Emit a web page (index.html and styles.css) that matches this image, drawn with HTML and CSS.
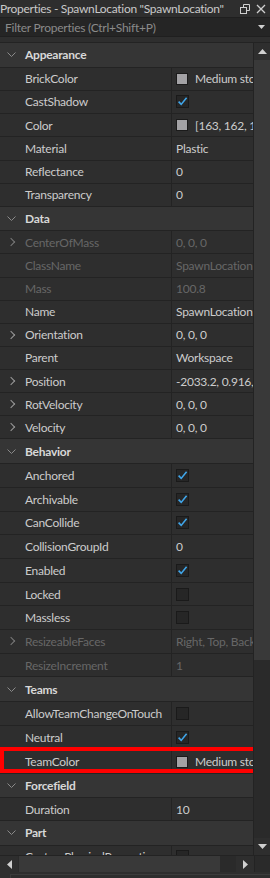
FILE: index.html
```html
<!DOCTYPE html>
<html lang="en">
<head>
    <meta charset="UTF-8">
    <meta name="viewport" content="width=device-width, initial-scale=1.0">
    <title>Properties - SpawnLocation</title>
    <link rel="stylesheet" href="styles.css">
</head>
<body>
    <div class="panel">
        <div class="titlebar">
            <span class="title">Properties - SpawnLocation "SpawnLocation"</span>
            <svg class="tb-icon" width="10" height="10" viewBox="0 0 10 10">
                <path d="M3.5 0.5 H9.5 V6.5 H6.5 M3.5 0.5 V3.5" fill="none" stroke="#cfcfcf" stroke-width="1"/>
                <rect x="0.5" y="3.5" width="6" height="6" fill="none" stroke="#cfcfcf" stroke-width="1"/>
            </svg>
            <svg class="tb-icon" width="10" height="10" viewBox="0 0 10 10">
                <path d="M1 1 L9 9 M9 1 L1 9" stroke="#cfcfcf" stroke-width="1.3"/>
            </svg>
        </div>

        <div class="filter">
            <span class="placeholder">Filter Properties (Ctrl+Shift+P)</span>
            <svg width="7" height="4" viewBox="0 0 7 4"><path d="M0 0 H7 L3.5 4 Z" fill="#cfcfcf"/></svg>
        </div>

        <div class="body">
            <div class="list">
                <!-- Appearance -->
                <div class="section sec-appearance">
                    <div class="group"><svg class="caret" width="9" height="5" viewBox="0 0 9 5"><path d="M0.5 0.5 L4.5 4.5 L8.5 0.5" fill="none" stroke="#8a8a8a" stroke-width="1"/></svg>Appearance</div>
                    <div class="row"><div class="name">BrickColor</div><div class="value"><span class="swatch"></span>Medium stone grey</div></div>
                    <div class="row"><div class="name">CastShadow</div><div class="value"><span class="check on"></span></div></div>
                    <div class="row"><div class="name">Color</div><div class="value"><span class="swatch"></span>[163, 162, 165]</div></div>
                    <div class="row"><div class="name">Material</div><div class="value">Plastic</div></div>
                    <div class="row"><div class="name">Reflectance</div><div class="value">0</div></div>
                    <div class="row"><div class="name">Transparency</div><div class="value">0</div></div>
                </div>

                <!-- Data -->
                <div class="section sec-data">
                    <div class="group"><svg class="caret" width="9" height="5" viewBox="0 0 9 5"><path d="M0.5 0.5 L4.5 4.5 L8.5 0.5" fill="none" stroke="#8a8a8a" stroke-width="1"/></svg>Data</div>
                    <div class="row off"><div class="name"><span class="expand"></span>CenterOfMass</div><div class="value">0, 0, 0</div></div>
                    <div class="row off"><div class="name">ClassName</div><div class="value">SpawnLocation</div></div>
                    <div class="row off"><div class="name">Mass</div><div class="value">100.8</div></div>
                    <div class="row"><div class="name">Name</div><div class="value">SpawnLocation</div></div>
                    <div class="row"><div class="name"><span class="expand"></span>Orientation</div><div class="value">0, 0, 0</div></div>
                    <div class="row"><div class="name">Parent</div><div class="value">Workspace</div></div>
                    <div class="row"><div class="name"><span class="expand"></span>Position</div><div class="value">-2033.2, 0.916, 44.5</div></div>
                    <div class="row"><div class="name"><span class="expand"></span>RotVelocity</div><div class="value">0, 0, 0</div></div>
                    <div class="row"><div class="name"><span class="expand"></span>Velocity</div><div class="value">0, 0, 0</div></div>
                </div>

                <!-- Behavior -->
                <div class="section sec-behavior">
                    <div class="group"><svg class="caret" width="9" height="5" viewBox="0 0 9 5"><path d="M0.5 0.5 L4.5 4.5 L8.5 0.5" fill="none" stroke="#8a8a8a" stroke-width="1"/></svg>Behavior</div>
                    <div class="row"><div class="name">Anchored</div><div class="value"><span class="check on"></span></div></div>
                    <div class="row"><div class="name">Archivable</div><div class="value"><span class="check on"></span></div></div>
                    <div class="row"><div class="name">CanCollide</div><div class="value"><span class="check on"></span></div></div>
                    <div class="row"><div class="name">CollisionGroupId</div><div class="value">0</div></div>
                    <div class="row"><div class="name">Enabled</div><div class="value"><span class="check on"></span></div></div>
                    <div class="row"><div class="name">Locked</div><div class="value"><span class="check"></span></div></div>
                    <div class="row"><div class="name">Massless</div><div class="value"><span class="check"></span></div></div>
                    <div class="row off"><div class="name"><span class="expand"></span>ResizeableFaces</div><div class="value">Right, Top, Back</div></div>
                    <div class="row off"><div class="name">ResizeIncrement</div><div class="value">1</div></div>
                </div>

                <!-- Teams -->
                <div class="section sec-teams">
                    <div class="group"><svg class="caret" width="9" height="5" viewBox="0 0 9 5"><path d="M0.5 0.5 L4.5 4.5 L8.5 0.5" fill="none" stroke="#8a8a8a" stroke-width="1"/></svg>Teams</div>
                    <div class="row"><div class="name">AllowTeamChangeOnTouch</div><div class="value"><span class="check"></span></div></div>
                    <div class="row"><div class="name">Neutral</div><div class="value"><span class="check on"></span></div></div>
                    <div class="row marked"><div class="name">TeamColor</div><div class="value"><span class="swatch"></span>Medium stone grey</div></div>
                </div>

                <!-- Forcefield -->
                <div class="section sec-forcefield">
                    <div class="group"><svg class="caret" width="9" height="5" viewBox="0 0 9 5"><path d="M0.5 0.5 L4.5 4.5 L8.5 0.5" fill="none" stroke="#8a8a8a" stroke-width="1"/></svg>Forcefield</div>
                    <div class="row"><div class="name">Duration</div><div class="value">10</div></div>
                </div>

                <!-- Part -->
                <div class="section sec-part">
                    <div class="group"><svg class="caret" width="9" height="5" viewBox="0 0 9 5"><path d="M0.5 0.5 L4.5 4.5 L8.5 0.5" fill="none" stroke="#8a8a8a" stroke-width="1"/></svg>Part</div>
                    <div class="row"><div class="name">CustomPhysicalProperties</div><div class="value"><span class="check"></span></div></div>
                </div>
            </div>

            <div class="vscroll">
                <div class="sb-btn"><svg width="9" height="5" viewBox="0 0 9 5"><path d="M0 5 H9 L4.5 0 Z" fill="#d0d0d0"/></svg></div>
                <div class="sb-thumb"></div>
                <div class="sb-track"></div>
                <div class="sb-btn"><svg width="9" height="5" viewBox="0 0 9 5"><path d="M0 0 H9 L4.5 5 Z" fill="#d0d0d0"/></svg></div>
            </div>
        </div>

        <div class="hscroll">
            <div class="hb-btn"><svg width="5" height="9" viewBox="0 0 5 9"><path d="M5 0 V9 L0 4.5 Z" fill="#d0d0d0"/></svg></div>
            <div class="hb-thumb"></div>
            <div class="hb-track"></div>
            <div class="hb-btn"><svg width="5" height="9" viewBox="0 0 5 9"><path d="M0 0 V9 L5 4.5 Z" fill="#d0d0d0"/></svg></div>
            <div class="corner"></div>
        </div>

        <div class="footer"><div class="footer-box"></div></div>
    </div>
</body>
</html>
```

FILE: styles.css
```css
body {
    margin: 0;
    background: #2e2e2e;
    font-family: Lato, "Noto Sans", sans-serif;
    font-size: 12px;
    letter-spacing: -0.25px;
    color: #cccccc;
}
.panel {
    width: 270px;
    height: 878px;
    display: flex;
    flex-direction: column;
    overflow: hidden;
    background: #2e2e2e;
}

/* title + filter */
.titlebar {
    height: 17px;
    display: flex;
    align-items: center;
    gap: 6px;
    padding-right: 4px;
    white-space: nowrap;
}
.title {
    flex: 1;
    font-size: 12px;
    letter-spacing: -0.3px;
    color: #c9c9c9;
    line-height: 17px;
    overflow: hidden;
}
.tb-icon {
    flex: none;
}
.filter {
    height: 20px;
    box-sizing: border-box;
    background: #252525;
    border-top: 1px solid #1f1f1f;
    border-bottom: 1px solid #1f1f1f;
    display: flex;
    align-items: center;
    justify-content: space-between;
    padding: 0 5px 0 5px;
}
.placeholder {
    color: #8a8a8a;
}

/* property list */
.body {
    margin-top: 5px;
    height: 812px;
    display: flex;
    border-top: 1px solid #232323;
}
.list {
    width: 253px;
    overflow: hidden;
    border-right: 1px solid #232323;
}
.sec-appearance { --row: 23.25px; --head: 24.6px; }
.sec-data       { --row: 23.1px;  --head: 24.3px; }
.sec-behavior   { --row: 23.7px;  --head: 25px; }
.sec-teams      { --row: 23.85px; --head: 25px; }
.sec-forcefield { --row: 23.4px;  --head: 24px; }
.sec-part       { --row: 23.4px;  --head: 24.3px; }

.group {
    height: var(--head);
    box-sizing: border-box;
    background: #353535;
    border-bottom: 1px solid #232323;
    display: flex;
    align-items: center;
    font-weight: bold;
    color: #d8d8d8;
    padding-left: 7px;
}
.caret {
    margin-right: 9px;
}
.row {
    height: var(--row);
    box-sizing: border-box;
    display: grid;
    grid-template-columns: 172px 1fr;
    border-bottom: 1px solid #232323;
    position: relative;
}
.name, .value {
    display: flex;
    align-items: center;
    white-space: nowrap;
    overflow: hidden;
}
.name {
    padding-left: 25px;
    border-right: 1px solid #232323;
    position: relative;
}
.value {
    padding-left: 4px;
}
.row.off .name, .row.off .value {
    color: #676767;
}
.expand {
    position: absolute;
    left: 8px;
    top: 50%;
    width: 5px;
    height: 5px;
    margin-top: -3px;
    border-right: 1.3px solid #9a9a9a;
    border-top: 1.3px solid #9a9a9a;
    transform: rotate(45deg);
    transform-origin: center;
}
.row.off .expand {
    border-color: #7a7a7a;
}
.swatch {
    width: 10px;
    height: 10px;
    flex: none;
    background: #a3a2a5;
    border: 1px solid #1b1b1b;
    margin-right: 7px;
}
.check {
    width: 13px;
    height: 13px;
    flex: none;
    box-sizing: border-box;
    background: #262626;
    border: 1px solid #1a1a1a;
}
.check.on {
    background: #262626 url("data:image/svg+xml;utf8,<svg xmlns='http://www.w3.org/2000/svg' width='11' height='11' viewBox='0 0 11 11'><path d='M1.6 5.6 L4.2 8.4 L9.6 1.8' fill='none' stroke='%2340a6ea' stroke-width='1.6'/></svg>") center / 11px 11px no-repeat;
}

/* annotation outline */
.row.marked::after {
    content: "";
    position: absolute;
    left: 0;
    top: -3px;
    width: 257px;
    height: 26px;
    box-sizing: border-box;
    border: 4px solid #ff0000;
    z-index: 2;
}

/* scrollbars */
.vscroll {
    width: 16px;
    display: flex;
    flex-direction: column;
    background: #2a2a2a;
}
.sb-btn {
    height: 17px;
    flex: none;
    display: flex;
    align-items: center;
    justify-content: center;
    background: #2e2e2e;
}
.sb-thumb {
    height: 600px;
    background: #393939;
}
.sb-track {
    flex: 1;
}
.hscroll {
    height: 17px;
    display: flex;
    background: #2a2a2a;
    border-top: 1px solid #232323;
    box-sizing: border-box;
}
.hb-btn {
    width: 18px;
    flex: none;
    display: flex;
    align-items: center;
    justify-content: center;
    background: #2e2e2e;
}
.hb-thumb {
    width: 201px;
    margin-left: 1px;
    background: #393939;
}
.hb-track {
    width: 16px;
}
.corner {
    flex: 1;
    background: #2a2a2a;
    border-left: 1px solid #232323;
}
.footer {
    flex: 1;
    padding: 2px 0 0 10px;
}
.footer-box {
    height: 100%;
    border-top: 1px solid #3c3c3c;
    border-left: 1px solid #3c3c3c;
}
```
